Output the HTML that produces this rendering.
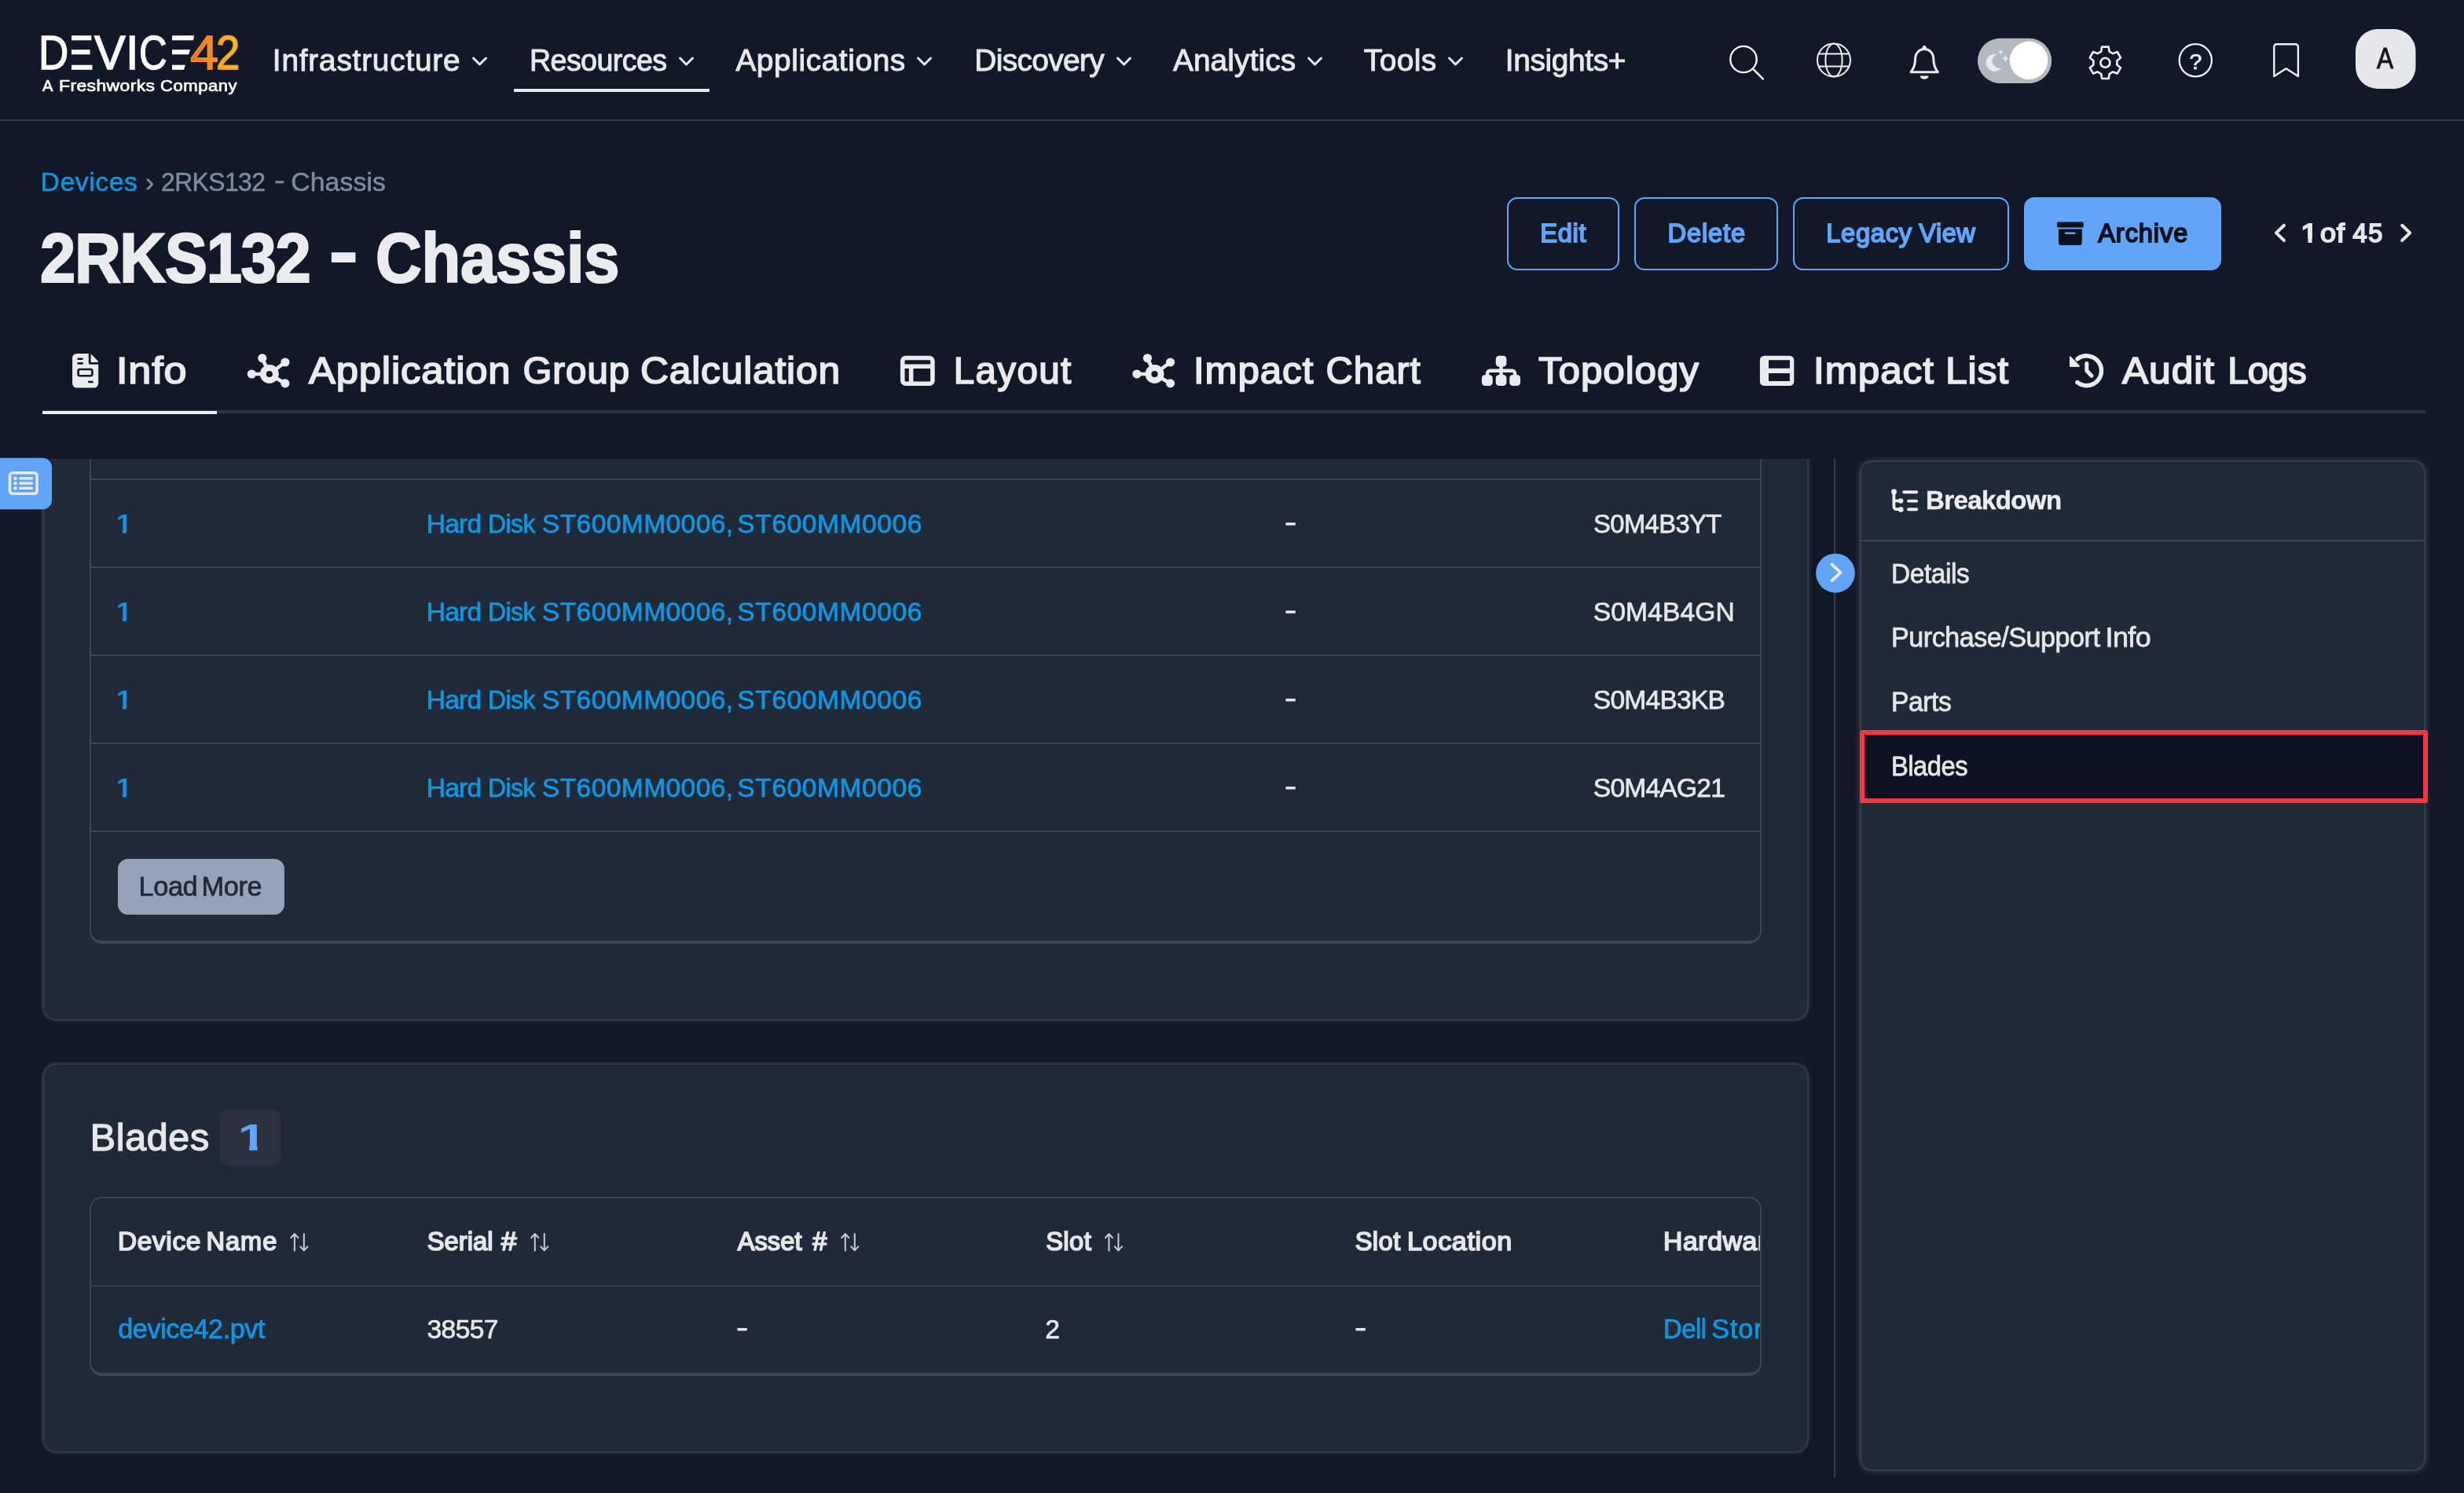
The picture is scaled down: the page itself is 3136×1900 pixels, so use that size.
<!DOCTYPE html>
<html lang="en"><head><meta charset="utf-8"><title>2RKS132 - Chassis | Device42</title>
<style>
html,body{margin:0;padding:0;background:#111827;overflow:hidden;}
body{width:3136px;height:1900px;position:relative;overflow:hidden;font-family:"Liberation Sans",Arial,sans-serif;}
.t{position:absolute;white-space:nowrap;display:block;margin:0;padding:0;border:0;background:none;font-family:inherit;font-weight:400;text-decoration:none;text-align:left;cursor:default;}
.g{position:static;display:block;margin:0;padding:0;border:0;background:none;font:inherit;color:inherit;text-decoration:none;width:0;height:0;}
button.g,button.t{appearance:none;-webkit-appearance:none;overflow:visible;}
.abs{position:absolute;}
.card{position:absolute;background:#1f2937;border-radius:16px;box-shadow:0 0 0 2.2px rgba(170,180,205,0.10),0 0 5px 2px rgba(170,180,205,0.21);}
.tbl{position:absolute;border:2px solid #3b4554;border-radius:16px;box-sizing:border-box;}
.hl{position:absolute;left:116px;width:2124px;height:2px;background:#3b4554;}
.btn{position:absolute;box-sizing:border-box;border:2.4px solid #60a5fa;border-radius:13px;top:251px;height:92.5px;}
svg{position:absolute;left:0;top:0;}
</style></head><body>
<div class="abs" style="left:0;top:152px;width:3136px;height:2px;background:#343c4b"></div>
<div class="abs" style="left:654px;top:112.5px;width:249px;height:4px;background:#e7e9ee"></div>
<div class="abs" style="left:54px;top:522px;width:3033px;height:4px;background:#2c3444"></div>
<div class="abs" style="left:54px;top:522.5px;width:222px;height:4.5px;background:#eceef2"></div>
<div class="btn" style="left:1918px;width:143px"></div>
<div class="btn" style="left:2080px;width:183px"></div>
<div class="btn" style="left:2281.6px;width:275px"></div>
<div class="btn" style="left:2576px;width:251px;background:#60a5fa"></div>
<div class="abs" style="left:0;top:584px;width:2322px;height:1316px;overflow:hidden">
 <div class="abs" style="left:0;top:-584px;width:2322px;height:1900px">
  <div class="card" style="left:56px;top:300px;width:2244px;height:997px"></div>
  <div class="tbl" style="left:114px;top:300px;width:2128px;height:901px;border-bottom-width:4px"></div>
  <div class="hl" style="top:609px"></div><div class="hl" style="top:721px"></div><div class="hl" style="top:833px"></div><div class="hl" style="top:945px"></div><div class="hl" style="top:1057px"></div>
  <div class="abs" style="left:150px;top:1093px;width:212px;height:71px;border-radius:13px;background:#94a3b8"></div>
  <div class="card" style="left:56px;top:1355px;width:2244px;height:492px"></div>
  <div class="abs" style="left:280.4px;top:1412px;width:76.4px;height:71.4px;border-radius:9px;background:#2b313e"></div>
  <div class="tbl" style="left:114px;top:1523px;width:2128px;height:227.6px;border-bottom-width:4px"></div>
  <div class="hl" style="top:1635.6px;height:1.6px"></div>
 </div>
</div>
<div class="card" style="left:2369px;top:588px;width:716px;height:1282px;border-radius:13px;box-shadow:0 0 0 2.2px rgba(170,180,205,0.10),0 0 8px 2px rgba(170,180,205,0.27)"></div>
<div class="abs" style="left:2368px;top:687px;width:718px;height:2px;background:#3b4554"></div>
<div class="abs" style="left:2367px;top:929px;width:722.5px;height:93.4px;box-sizing:border-box;border:6.4px solid #f23547;background:#0b1323;border-radius:3px"></div>
<svg width="3136" height="1900" viewBox="0 0 3136 1900" style="will-change:transform">
<path d="M602.5 74.0 L610.5 82.0 L618.5 74.0" fill="none" stroke="#e7e9ee" stroke-width="3" stroke-linecap="round" stroke-linejoin="round"/>
<path d="M865.5 74.0 L873.5 82.0 L881.5 74.0" fill="none" stroke="#e7e9ee" stroke-width="3" stroke-linecap="round" stroke-linejoin="round"/>
<path d="M1168.5 74.0 L1176.5 82.0 L1184.5 74.0" fill="none" stroke="#e7e9ee" stroke-width="3" stroke-linecap="round" stroke-linejoin="round"/>
<path d="M1422.5 74.0 L1430.5 82.0 L1438.5 74.0" fill="none" stroke="#e7e9ee" stroke-width="3" stroke-linecap="round" stroke-linejoin="round"/>
<path d="M1665.5 74.0 L1673.5 82.0 L1681.5 74.0" fill="none" stroke="#e7e9ee" stroke-width="3" stroke-linecap="round" stroke-linejoin="round"/>
<path d="M1844.5 74.0 L1852.5 82.0 L1860.5 74.0" fill="none" stroke="#e7e9ee" stroke-width="3" stroke-linecap="round" stroke-linejoin="round"/>
<circle cx="2219" cy="75.5" r="16.7" fill="none" stroke="#fff" stroke-width="2.3"/><path d="M2231 87.6 L2243.8 100.4" stroke="#fff" stroke-width="2.5" stroke-linecap="round"/>
<g fill="none" stroke="#eef0f3" stroke-width="2"><circle cx="2334" cy="76.5" r="21"/><ellipse cx="2334" cy="76.5" rx="10.6" ry="21"/><path d="M2314.6 68.6 H2353.4 M2314.6 84.6 H2353.4"/></g>
<g fill="none" stroke="#e7e9ee" stroke-width="3" stroke-linejoin="round"><path d="M2432 91.8 C2436.6 86 2437.6 80 2437.6 75 C2437.6 67.6 2442.6 62.6 2449.2 62.6 C2455.8 62.6 2460.8 67.6 2460.8 75 C2460.8 80 2461.8 86 2466.4 91.8 Z"/></g><circle cx="2449.2" cy="60.6" r="2.6" fill="#e7e9ee"/><path d="M2443.6 96.4 A5.7 5.2 0 0 0 2454.8 96.4 Z" fill="#e7e9ee"/>
<rect x="2517" y="48.8" width="94.2" height="57.2" rx="28.6" fill="#b3b8c0"/><circle cx="2582.1" cy="76.9" r="24.3" fill="#fff"/>
<path d="M2541.5 69.2 A11 11 0 1 0 2547.6 86.2 A9 9 0 0 1 2541.5 69.2 Z" fill="#e9ebef"/>
<path d="M2546.3 62.5 L2547.136 65.464 L2550.1000000000004 66.3 L2547.136 67.136 L2546.3 70.1 L2545.4640000000004 67.136 L2542.5 66.3 L2545.4640000000004 65.464 Z" fill="#eef0f3"/>
<path d="M2552.6 69.2 L2553.7439999999997 73.256 L2557.7999999999997 74.4 L2553.7439999999997 75.54400000000001 L2552.6 79.60000000000001 L2551.456 75.54400000000001 L2547.4 74.4 L2551.456 73.256 Z" fill="#eef0f3"/>
<path d="M2684.60 65.52 L2683.68 59.65 L2675.12 59.65 L2674.20 65.52 L2669.63 68.16 L2664.09 66.02 L2659.81 73.43 L2664.43 77.16 L2664.43 82.44 L2659.81 86.17 L2664.09 93.58 L2669.63 91.44 L2674.20 94.08 L2675.12 99.95 L2683.68 99.95 L2684.60 94.08 L2689.17 91.44 L2694.71 93.58 L2698.99 86.17 L2694.37 82.44 L2694.37 77.16 L2698.99 73.43 L2694.71 66.02 L2689.17 68.16 Z" fill="none" stroke="#eef0f3" stroke-width="2.6" stroke-linejoin="round"/><circle cx="2679.4" cy="79.8" r="6" fill="none" stroke="#eef0f3" stroke-width="2.6"/>
<circle cx="2794.3" cy="76.8" r="20.6" fill="none" stroke="#eef0f3" stroke-width="2.3"/>
<path d="M2894.3 97 V59.6 a3.4 3.4 0 0 1 3.4 -3.4 h23.8 a3.4 3.4 0 0 1 3.4 3.4 V97 L2909.6 87.2 Z" fill="none" stroke="#eef0f3" stroke-width="2.4" stroke-linejoin="round"/>
<rect x="2998" y="37" width="76.5" height="76" rx="28" fill="#e5e7eb"/>
<rect x="2618" y="282.4" width="33.8" height="7.2" rx="1.8" fill="#0a101c"/><path d="M2620 291.4 H2649.8 V308.4 a3.6 3.6 0 0 1 -3.6 3.6 H2623.6 a3.6 3.6 0 0 1 -3.6 -3.6 Z" fill="#0a101c"/><rect x="2628" y="295.4" width="13.6" height="2.7" rx="1.3" fill="#60a5fa"/>
<path d="M2907 286.8 L2897 296.4 L2907 306" fill="none" stroke="#e5e7eb" stroke-width="4" stroke-linecap="round" stroke-linejoin="round"/>
<path d="M3057.2 286.8 L3067.2 296.4 L3057.2 306" fill="none" stroke="#e5e7eb" stroke-width="4" stroke-linecap="round" stroke-linejoin="round"/>
<path d="M97.6 450 H112.8 V461.2 a2.6 2.6 0 0 0 2.6 2.6 H125.2 V488 a5.5 5.5 0 0 1 -5.5 5.5 H97.6 a5.5 5.5 0 0 1 -5.5 -5.5 V455.5 a5.5 5.5 0 0 1 5.5 -5.5 Z" fill="#e9ebef"/><path d="M115.6 450.2 L125 459.8 V461 H115.6 Z" fill="#e9ebef"/><g stroke="#111827" stroke-width="2.6" stroke-linecap="round" fill="none"><path d="M99.6 456.8 H104.6 M99.6 462.4 H104.6 M113.2 486 H117.6"/><rect x="99.6" y="470" width="17.8" height="8.2" rx="2"/></g>
<g stroke="#e9ebef" stroke-width="4.6" stroke-linecap="round"><path d="M342.90000000000003 476 L333.8 455.8"/><path d="M342.90000000000003 476 L362.90000000000003 461"/><path d="M342.90000000000003 476 L320.3 476"/><path d="M342.90000000000003 476 L362.90000000000003 487.9"/></g><circle cx="333.8" cy="455.8" r="5.6" fill="#e9ebef"/><circle cx="362.90000000000003" cy="461" r="5.6" fill="#e9ebef"/><circle cx="320.3" cy="476" r="5.6" fill="#e9ebef"/><circle cx="362.90000000000003" cy="487.9" r="5.6" fill="#e9ebef"/><circle cx="342.90000000000003" cy="476" r="11.9" fill="#e9ebef"/><circle cx="342.90000000000003" cy="476" r="4.1" fill="#111827"/>
<g stroke="#e9ebef" stroke-width="4.6" stroke-linecap="round"><path d="M1469.5 476 L1460.4 455.8"/><path d="M1469.5 476 L1489.5 461"/><path d="M1469.5 476 L1446.9 476"/><path d="M1469.5 476 L1489.5 487.9"/></g><circle cx="1460.4" cy="455.8" r="5.6" fill="#e9ebef"/><circle cx="1489.5" cy="461" r="5.6" fill="#e9ebef"/><circle cx="1446.9" cy="476" r="5.6" fill="#e9ebef"/><circle cx="1489.5" cy="487.9" r="5.6" fill="#e9ebef"/><circle cx="1469.5" cy="476" r="11.9" fill="#e9ebef"/><circle cx="1469.5" cy="476" r="4.1" fill="#111827"/>
<g fill="none" stroke="#e9ebef" stroke-width="5.6"><rect x="1148.7" y="455.55" width="38.2" height="32.65" rx="4"/><path d="M1148.7 466.3 H1186.9 M1159.6 466.3 V488.2"/></g>
<g fill="#e9ebef"><rect x="1903.7" y="452.7" width="13.7" height="14" rx="4.2"/><rect x="1885.9" y="477" width="13.8" height="14.1" rx="4.2"/><rect x="1903.7" y="477" width="13.7" height="14.1" rx="4.2"/><rect x="1921.2" y="477" width="13.8" height="14.1" rx="4.2"/></g><path d="M1910.5 466 V478 M1893 478 V475 a3.2 3.2 0 0 1 3.2 -3.2 H1924.8 a3.2 3.2 0 0 1 3.2 3.2 V478" fill="none" stroke="#e9ebef" stroke-width="4.4"/>
<path fill-rule="evenodd" fill="#e9ebef" d="M2245.6 452.7 H2277.6 a5.7 5.7 0 0 1 5.7 5.7 V485.4 a5.7 5.7 0 0 1 -5.7 5.7 H2245.6 a5.7 5.7 0 0 1 -5.7 -5.7 V458.4 a5.7 5.7 0 0 1 5.7 -5.7 Z M2251 458.2 V468.8 H2277.9 V458.2 Z M2251 474.9 V485.1 H2277.9 V474.9 Z"/>
<path d="M2643.96 456.86 A18.9 18.9 0 1 1 2643.96 486.64" fill="none" stroke="#e9ebef" stroke-width="5.5" stroke-linecap="round"/><path d="M2635.4 453.6 L2646.6 465 a1.2 1.2 0 0 1 -0.9 2 H2635.6 a1.6 1.6 0 0 1 -1.6 -1.6 V454.2 a0.8 0.8 0 0 1 1.4 -0.6 Z" fill="#e9ebef"/><path d="M2655.8 462.6 V471.8 L2662 478.2" fill="none" stroke="#e9ebef" stroke-width="5" stroke-linecap="round" stroke-linejoin="round"/>
<path d="M0 582.8 H54 a12 12 0 0 1 12 12 V636.2 a12 12 0 0 1 -12 12 H0 Z" fill="#60a5fa"/><rect x="12.5" y="601.8" width="34.6" height="26.4" rx="3.4" fill="none" stroke="#e8eaee" stroke-width="3.6"/><g fill="#e8eaee"><circle cx="19.5" cy="608.8" r="2.3"/><circle cx="19.5" cy="615" r="2.3"/><circle cx="19.5" cy="621.3" r="2.3"/><rect x="24.2" y="607" width="17.8" height="3.6" rx="1.6"/><rect x="24.2" y="613.2" width="17.8" height="3.6" rx="1.6"/><rect x="24.2" y="619.5" width="17.8" height="3.6" rx="1.6"/></g>
<rect x="2334" y="584" width="2.1" height="1296" fill="#363e4e"/><circle cx="2336" cy="729.3" r="24.9" fill="#60a5fa"/><path d="M2331.6 718.4 L2342.6 728.6 L2331.6 738.8" fill="none" stroke="#e8eaee" stroke-width="4" stroke-linecap="round" stroke-linejoin="round"/>
<g stroke="#eceef2" fill="none" stroke-width="3.8" stroke-linecap="round"><path d="M2410.4 626 V644.6 a3.6 3.6 0 0 0 3.6 3.6 H2418 M2410.4 637.4 H2418"/><path d="M2423.2 626.2 H2439.2 M2429 637.6 H2439.2 M2429 648.2 H2439.2" stroke-width="3.9"/></g><g fill="#eceef2"><rect x="2407.2" y="622.6" width="6.6" height="6.6" rx="2.4"/><circle cx="2419.2" cy="637.4" r="3.1"/><circle cx="2419.2" cy="648.4" r="3.3"/></g>
<g fill="none" stroke="#c9cdd4" stroke-width="2" stroke-linecap="round" stroke-linejoin="round"><path d="M374.90000000000003 1591.4 V1570.4 M370.3 1575.2 L374.90000000000003 1570.2 L379.5 1575.2"/><path d="M386.90000000000003 1570.2 V1591.2 M382.3 1586.4 L386.90000000000003 1591.4 L391.5 1586.4"/></g>
<g fill="none" stroke="#c9cdd4" stroke-width="2" stroke-linecap="round" stroke-linejoin="round"><path d="M680.8000000000001 1591.4 V1570.4 M676.2 1575.2 L680.8000000000001 1570.2 L685.4000000000001 1575.2"/><path d="M692.8000000000001 1570.2 V1591.2 M688.2 1586.4 L692.8000000000001 1591.4 L697.4000000000001 1586.4"/></g>
<g fill="none" stroke="#c9cdd4" stroke-width="2" stroke-linecap="round" stroke-linejoin="round"><path d="M1075.8 1591.4 V1570.4 M1071.2 1575.2 L1075.8 1570.2 L1080.4 1575.2"/><path d="M1087.8 1570.2 V1591.2 M1083.2 1586.4 L1087.8 1591.4 L1092.4 1586.4"/></g>
<g fill="none" stroke="#c9cdd4" stroke-width="2" stroke-linecap="round" stroke-linejoin="round"><path d="M1411.3999999999999 1591.4 V1570.4 M1406.8 1575.2 L1411.3999999999999 1570.2 L1416.0 1575.2"/><path d="M1423.3999999999999 1570.2 V1591.2 M1418.8 1586.4 L1423.3999999999999 1591.4 L1428.0 1586.4"/></g>
<text x="2794.4" y="88" text-anchor="middle" font-family="Liberation Sans, Arial, sans-serif" font-size="28.5" fill="#eef0f3" stroke="#eef0f3" stroke-width="0.7">?</text>
</svg>
<div class="logo" role="img" aria-label="DEVICE42 - A Freshworks Company" style="position:absolute;left:0;top:0;width:320px;height:130px;font-family:'Liberation Sans',Arial,sans-serif;white-space:nowrap"><span style="position:absolute;left:48.76px;top:26.90px;font-size:62.0px;line-height:80px;transform-origin:0 0;transform:scaleX(0.8549);color:#fff;-webkit-text-stroke:1.4px #fff;z-index:3;">D</span><span style="position:absolute;left:80.40px;top:26.90px;font-size:62.0px;line-height:80px;transform-origin:0 0;transform:scaleX(0.9497);color:#fff;-webkit-text-stroke:1.4px #fff;z-index:1;">E</span><span style="position:absolute;left:120.00px;top:26.90px;font-size:62.0px;line-height:80px;transform-origin:0 0;transform:scaleX(0.9602);color:#fff;-webkit-text-stroke:1.4px #fff;z-index:3;">V</span><span style="position:absolute;left:160.16px;top:26.90px;font-size:62.0px;line-height:80px;transform-origin:0 0;transform:scaleX(0.9585);color:#fff;-webkit-text-stroke:1.4px #fff;z-index:3;">I</span><span style="position:absolute;left:177.09px;top:26.90px;font-size:62.0px;line-height:80px;transform-origin:0 0;transform:scaleX(0.7956);color:#fff;-webkit-text-stroke:1.4px #fff;z-index:3;">C</span><span style="position:absolute;left:206.11px;top:26.90px;font-size:62.0px;line-height:80px;transform-origin:0 0;transform:scaleX(1.0706);color:#fff;-webkit-text-stroke:1.4px #fff;z-index:1;">E</span><span style="position:absolute;left:241.69px;top:26.90px;font-size:62.0px;line-height:80px;transform-origin:0 0;transform:scaleX(1.0416);background:linear-gradient(90deg,#f26a21,#f8981d);-webkit-background-clip:text;background-clip:text;color:transparent;-webkit-text-stroke:1.3px rgba(247,150,30,0.75);z-index:3;">4</span><span style="position:absolute;left:274.64px;top:26.90px;font-size:62.0px;line-height:80px;transform-origin:0 0;transform:scaleX(0.8809);background:linear-gradient(90deg,#f9a51a,#fdc70c);-webkit-background-clip:text;background-clip:text;color:transparent;-webkit-text-stroke:1.3px rgba(247,150,30,0.75);z-index:3;">2</span><i style="position:absolute;left:82.5px;top:40px;width:8.7px;height:54px;background:#111827;z-index:2"></i><i style="position:absolute;left:208.5px;top:40px;width:10.2px;height:54px;background:#111827;z-index:2"></i><i style="position:absolute;left:240px;top:40px;width:30px;height:54px;background:#111827;z-index:2;transform-origin:0 0;transform:translateX(9.4px) skewX(-17.5deg)"></i></div>
<div id="txt" style="position:absolute;left:0;top:0;width:3136px;height:1900px;will-change:transform">
<nav aria-label="Main">
<a href="#" class="t" style="left:346.87px;top:53.00px;font-size:38.81px;line-height:47px;color:#e7e9ee;letter-spacing:0.782px;-webkit-text-stroke:1.0px #e7e9ee;">Infrastructure</a>
<a href="#" class="t" style="left:673.96px;top:53.00px;font-size:38.81px;line-height:47px;color:#e7e9ee;letter-spacing:-0.585px;-webkit-text-stroke:1.0px #e7e9ee;transform-origin:0 0;transform:scaleX(0.9684);">Resources</a>
<a href="#" class="t" style="left:936.40px;top:53.00px;font-size:38.81px;line-height:47px;color:#e7e9ee;letter-spacing:0.604px;-webkit-text-stroke:1.0px #e7e9ee;">Applications</a>
<a href="#" class="t" style="left:1240.37px;top:53.00px;font-size:38.81px;line-height:47px;color:#e7e9ee;letter-spacing:-0.641px;-webkit-text-stroke:1.0px #e7e9ee;">Discovery</a>
<a href="#" class="t" style="left:1492.90px;top:53.00px;font-size:38.81px;line-height:47px;color:#e7e9ee;letter-spacing:0.139px;-webkit-text-stroke:1.0px #e7e9ee;">Analytics</a>
<a href="#" class="t" style="left:1735.79px;top:53.00px;font-size:38.81px;line-height:47px;color:#e7e9ee;letter-spacing:0.480px;-webkit-text-stroke:1.0px #e7e9ee;">Tools</a>
<a href="#" class="t" style="left:1915.87px;top:53.00px;font-size:38.81px;line-height:47px;color:#e7e9ee;letter-spacing:-0.343px;-webkit-text-stroke:1.0px #e7e9ee;">Insights+</a>
</nav>
<div class="s">
<span class="g"><span class="t" style="left:53.88px;top:96.50px;font-size:20.12px;line-height:25px;color:#ffffff;-webkit-text-stroke:0.7px #ffffff;">A</span> <span class="t" style="left:74.79px;top:96.50px;font-size:20.12px;line-height:25px;color:#ffffff;letter-spacing:0.347px;-webkit-text-stroke:0.7px #ffffff;transform-origin:0 0;transform:scaleX(1.1396);">Freshworks</span> <span class="t" style="left:204.14px;top:96.50px;font-size:20.12px;line-height:25px;color:#ffffff;letter-spacing:0.453px;-webkit-text-stroke:0.7px #ffffff;transform-origin:0 0;transform:scaleX(1.0985);">Company</span></span>
</div>
<nav aria-label="Breadcrumb">
<a href="#" class="t" style="left:51.57px;top:210.50px;font-size:33.72px;line-height:41px;color:#0d97e2;letter-spacing:0.560px;-webkit-text-stroke:0.5px #0d97e2;">Devices</a>
<span class="t" style="left:184.95px;top:210.50px;font-size:33.72px;line-height:41px;color:#7c8d9e;-webkit-text-stroke:0.5px #7c8d9e;">›</span>
<span class="g"><span class="t" style="left:205.01px;top:210.50px;font-size:33.72px;line-height:41px;color:#7c8d9e;letter-spacing:-0.624px;-webkit-text-stroke:0.5px #7c8d9e;transform-origin:0 0;transform:scaleX(0.9451);">2RKS132</span> <span class="t" style="left:348.71px;top:208.50px;font-size:33.72px;line-height:41px;color:#7c8d9e;-webkit-text-stroke:0.5px #7c8d9e;transform-origin:0 0;transform:scaleX(1.2281);">-</span> <span class="t" style="left:370.22px;top:210.50px;font-size:33.72px;line-height:41px;color:#7c8d9e;letter-spacing:0.117px;-webkit-text-stroke:0.5px #7c8d9e;">Chassis</span></span>
</nav>
<div class="s">
<h1 class="g"><span class="t" style="left:51.34px;top:275.00px;font-size:88.43px;line-height:107px;color:#eaecf0;font-weight:700;letter-spacing:-1.439px;-webkit-text-stroke:2.2px #eaecf0;transform-origin:0 0;transform:scaleX(0.92);">2RKS132</span> <span class="t" style="left:418.96px;top:267.00px;font-size:88.43px;line-height:107px;color:#eaecf0;font-weight:700;-webkit-text-stroke:2.2px #eaecf0;transform-origin:0 0;transform:scaleX(1.2363);">-</span> <span class="t" style="left:478.34px;top:275.00px;font-size:88.43px;line-height:107px;color:#eaecf0;font-weight:700;letter-spacing:-0.264px;-webkit-text-stroke:2.2px #eaecf0;transform-origin:0 0;transform:scaleX(0.92);">Chassis</span></h1>
</div>
<div class="s" role="toolbar">
<button type="button" class="t" style="left:1960.37px;top:276.50px;font-size:32.65px;line-height:40px;color:#60a5fa;letter-spacing:0.646px;-webkit-text-stroke:1.8px #60a5fa;">Edit</button>
<button type="button" class="t" style="left:2122.47px;top:276.50px;font-size:32.65px;line-height:40px;color:#60a5fa;letter-spacing:0.871px;-webkit-text-stroke:1.8px #60a5fa;">Delete</button>
<button type="button" class="g"><span class="t" style="left:2324.17px;top:276.50px;font-size:32.65px;line-height:40px;color:#60a5fa;letter-spacing:0.715px;-webkit-text-stroke:1.8px #60a5fa;">Legacy</span> <span class="t" style="left:2442.22px;top:276.50px;font-size:32.65px;line-height:40px;color:#60a5fa;letter-spacing:0.494px;-webkit-text-stroke:1.8px #60a5fa;">View</span></button>
<button type="button" class="t" style="left:2670.22px;top:276.50px;font-size:32.65px;line-height:40px;color:#0a101c;letter-spacing:0.885px;-webkit-text-stroke:1.8px #0a101c;">Archive</button>
</div>
<div class="s">
<span class="g"><span class="t" style="left:2928.14px;top:276.50px;font-size:32.65px;line-height:40px;color:#e5e7eb;-webkit-text-stroke:1.8px #e5e7eb;transform-origin:0 0;transform:scaleX(1.2451);clip-path:polygon(0 0,19.6px 0,19.6px 27.1px,11.7px 27.1px,11.7px 40px,7.6px 40px,7.6px 27.1px,0 27.1px);">1</span> <span class="t" style="left:2953.09px;top:276.50px;font-size:32.65px;line-height:40px;color:#e5e7eb;letter-spacing:0.834px;-webkit-text-stroke:1.8px #e5e7eb;transform-origin:0 0;transform:scaleX(1.1033);">of</span> <span class="t" style="left:2994.61px;top:276.50px;font-size:32.65px;line-height:40px;color:#e5e7eb;letter-spacing:1.577px;-webkit-text-stroke:1.8px #e5e7eb;">45</span></span>
</div>
<div class="s">
<span class="t" style="left:3025.36px;top:51.00px;font-size:37.62px;line-height:46px;color:#15181e;-webkit-text-stroke:0.9px #15181e;transform-origin:0 0;transform:scaleX(0.8419);">A</span>
</div>
<nav aria-label="Tabs">
<a href="#" class="t" style="left:147.85px;top:443.00px;font-size:47.44px;line-height:57px;color:#e9ebef;letter-spacing:0.779px;-webkit-text-stroke:1.7px #e9ebef;transform-origin:0 0;transform:scaleX(1.0996);">Info</a>
<a href="#" class="g"><span class="t" style="left:392.58px;top:443.00px;font-size:47.44px;line-height:57px;color:#e9ebef;letter-spacing:0.750px;-webkit-text-stroke:1.7px #e9ebef;transform-origin:0 0;transform:scaleX(1.071);">Application</span> <span class="t" style="left:665.46px;top:443.00px;font-size:47.44px;line-height:57px;color:#e9ebef;letter-spacing:0.984px;-webkit-text-stroke:1.7px #e9ebef;">Group</span> <span class="t" style="left:815.05px;top:443.00px;font-size:47.44px;line-height:57px;color:#e9ebef;letter-spacing:0.768px;-webkit-text-stroke:1.7px #e9ebef;transform-origin:0 0;transform:scaleX(1.0482);">Calculation</span></a>
<a href="#" class="t" style="left:1213.87px;top:443.00px;font-size:47.44px;line-height:57px;color:#e9ebef;letter-spacing:1.370px;-webkit-text-stroke:1.7px #e9ebef;">Layout</a>
<a href="#" class="g"><span class="t" style="left:1519.34px;top:443.00px;font-size:47.44px;line-height:57px;color:#e9ebef;letter-spacing:0.939px;-webkit-text-stroke:1.7px #e9ebef;transform-origin:0 0;transform:scaleX(1.0357);">Impact</span> <span class="t" style="left:1687.46px;top:443.00px;font-size:47.44px;line-height:57px;color:#e9ebef;letter-spacing:1.049px;-webkit-text-stroke:1.7px #e9ebef;">Chart</span></a>
<a href="#" class="t" style="left:1957.91px;top:443.00px;font-size:47.44px;line-height:57px;color:#e9ebef;letter-spacing:0.911px;-webkit-text-stroke:1.7px #e9ebef;transform-origin:0 0;transform:scaleX(1.0389);">Topology</a>
<a href="#" class="g"><span class="t" style="left:2307.53px;top:443.00px;font-size:47.44px;line-height:57px;color:#e9ebef;letter-spacing:0.936px;-webkit-text-stroke:1.7px #e9ebef;transform-origin:0 0;transform:scaleX(1.04);">Impact</span> <span class="t" style="left:2475.98px;top:443.00px;font-size:47.44px;line-height:57px;color:#e9ebef;letter-spacing:0.778px;-webkit-text-stroke:1.7px #e9ebef;transform-origin:0 0;transform:scaleX(1.0527);">List</span></a>
<a href="#" class="g"><span class="t" style="left:2701.18px;top:443.00px;font-size:47.44px;line-height:57px;color:#e9ebef;letter-spacing:0.902px;-webkit-text-stroke:1.7px #e9ebef;transform-origin:0 0;transform:scaleX(1.0486);">Audit</span> <span class="t" style="left:2835.17px;top:443.00px;font-size:47.44px;line-height:57px;color:#e9ebef;letter-spacing:-0.748px;-webkit-text-stroke:1.7px #e9ebef;">Logs</span></a>
</nav>
<section aria-label="Parts">
<a href="#" class="t" style="left:146.58px;top:646.00px;font-size:33.58px;line-height:41px;color:#0d97e2;-webkit-text-stroke:0.75px #0d97e2;transform-origin:0 0;transform:scaleX(1.1669);clip-path:polygon(0 0,20.1px 0,20.1px 28.0px,12.0px 28.0px,12.0px 41px,7.8px 41px,7.8px 28.0px,0 28.0px);">1</a>
<a href="#" class="g"><span class="t" style="left:542.68px;top:646.00px;font-size:33.58px;line-height:41px;color:#0d97e2;letter-spacing:-0.792px;-webkit-text-stroke:0.75px #0d97e2;">Hard</span> <span class="t" style="left:621.01px;top:646.00px;font-size:33.58px;line-height:41px;color:#0d97e2;letter-spacing:-0.556px;-webkit-text-stroke:0.75px #0d97e2;transform-origin:0 0;transform:scaleX(0.9492);">Disk</span> <span class="t" style="left:689.85px;top:646.00px;font-size:33.58px;line-height:41px;color:#0d97e2;letter-spacing:0.404px;-webkit-text-stroke:0.75px #0d97e2;">ST600MM0006,</span> <span class="t" style="left:938.35px;top:646.00px;font-size:33.58px;line-height:41px;color:#0d97e2;letter-spacing:0.553px;-webkit-text-stroke:0.75px #0d97e2;">ST600MM0006</span></a>
<span class="t" style="left:1634.88px;top:644.00px;font-size:33.58px;line-height:41px;color:#e5e7eb;-webkit-text-stroke:0.75px #e5e7eb;transform-origin:0 0;transform:scaleX(1.3565);">-</span>
<span class="t" style="left:2027.88px;top:646.00px;font-size:33.58px;line-height:41px;color:#e5e7eb;letter-spacing:-0.622px;-webkit-text-stroke:0.75px #e5e7eb;transform-origin:0 0;transform:scaleX(0.9763);">S0M4B3YT</span>
<a href="#" class="t" style="left:146.58px;top:758.00px;font-size:33.58px;line-height:41px;color:#0d97e2;-webkit-text-stroke:0.75px #0d97e2;transform-origin:0 0;transform:scaleX(1.1669);clip-path:polygon(0 0,20.1px 0,20.1px 28.0px,12.0px 28.0px,12.0px 41px,7.8px 41px,7.8px 28.0px,0 28.0px);">1</a>
<a href="#" class="g"><span class="t" style="left:542.68px;top:758.00px;font-size:33.58px;line-height:41px;color:#0d97e2;letter-spacing:-0.792px;-webkit-text-stroke:0.75px #0d97e2;">Hard</span> <span class="t" style="left:621.01px;top:758.00px;font-size:33.58px;line-height:41px;color:#0d97e2;letter-spacing:-0.556px;-webkit-text-stroke:0.75px #0d97e2;transform-origin:0 0;transform:scaleX(0.9492);">Disk</span> <span class="t" style="left:689.85px;top:758.00px;font-size:33.58px;line-height:41px;color:#0d97e2;letter-spacing:0.404px;-webkit-text-stroke:0.75px #0d97e2;">ST600MM0006,</span> <span class="t" style="left:938.35px;top:758.00px;font-size:33.58px;line-height:41px;color:#0d97e2;letter-spacing:0.553px;-webkit-text-stroke:0.75px #0d97e2;">ST600MM0006</span></a>
<span class="t" style="left:1634.88px;top:756.00px;font-size:33.58px;line-height:41px;color:#e5e7eb;-webkit-text-stroke:0.75px #e5e7eb;transform-origin:0 0;transform:scaleX(1.3565);">-</span>
<span class="t" style="left:2027.85px;top:758.00px;font-size:33.58px;line-height:41px;color:#e5e7eb;letter-spacing:0.103px;-webkit-text-stroke:0.75px #e5e7eb;">S0M4B4GN</span>
<a href="#" class="t" style="left:146.58px;top:870.00px;font-size:33.58px;line-height:41px;color:#0d97e2;-webkit-text-stroke:0.75px #0d97e2;transform-origin:0 0;transform:scaleX(1.1669);clip-path:polygon(0 0,20.1px 0,20.1px 28.0px,12.0px 28.0px,12.0px 41px,7.8px 41px,7.8px 28.0px,0 28.0px);">1</a>
<a href="#" class="g"><span class="t" style="left:542.68px;top:870.00px;font-size:33.58px;line-height:41px;color:#0d97e2;letter-spacing:-0.792px;-webkit-text-stroke:0.75px #0d97e2;">Hard</span> <span class="t" style="left:621.01px;top:870.00px;font-size:33.58px;line-height:41px;color:#0d97e2;letter-spacing:-0.556px;-webkit-text-stroke:0.75px #0d97e2;transform-origin:0 0;transform:scaleX(0.9492);">Disk</span> <span class="t" style="left:689.85px;top:870.00px;font-size:33.58px;line-height:41px;color:#0d97e2;letter-spacing:0.404px;-webkit-text-stroke:0.75px #0d97e2;">ST600MM0006,</span> <span class="t" style="left:938.35px;top:870.00px;font-size:33.58px;line-height:41px;color:#0d97e2;letter-spacing:0.553px;-webkit-text-stroke:0.75px #0d97e2;">ST600MM0006</span></a>
<span class="t" style="left:1634.88px;top:868.00px;font-size:33.58px;line-height:41px;color:#e5e7eb;-webkit-text-stroke:0.75px #e5e7eb;transform-origin:0 0;transform:scaleX(1.3565);">-</span>
<span class="t" style="left:2027.85px;top:870.00px;font-size:33.58px;line-height:41px;color:#e5e7eb;letter-spacing:-0.790px;-webkit-text-stroke:0.75px #e5e7eb;">S0M4B3KB</span>
<a href="#" class="t" style="left:146.58px;top:982.00px;font-size:33.58px;line-height:41px;color:#0d97e2;-webkit-text-stroke:0.75px #0d97e2;transform-origin:0 0;transform:scaleX(1.1669);clip-path:polygon(0 0,20.1px 0,20.1px 28.0px,12.0px 28.0px,12.0px 41px,7.8px 41px,7.8px 28.0px,0 28.0px);">1</a>
<a href="#" class="g"><span class="t" style="left:542.68px;top:982.00px;font-size:33.58px;line-height:41px;color:#0d97e2;letter-spacing:-0.792px;-webkit-text-stroke:0.75px #0d97e2;">Hard</span> <span class="t" style="left:621.01px;top:982.00px;font-size:33.58px;line-height:41px;color:#0d97e2;letter-spacing:-0.556px;-webkit-text-stroke:0.75px #0d97e2;transform-origin:0 0;transform:scaleX(0.9492);">Disk</span> <span class="t" style="left:689.85px;top:982.00px;font-size:33.58px;line-height:41px;color:#0d97e2;letter-spacing:0.404px;-webkit-text-stroke:0.75px #0d97e2;">ST600MM0006,</span> <span class="t" style="left:938.35px;top:982.00px;font-size:33.58px;line-height:41px;color:#0d97e2;letter-spacing:0.553px;-webkit-text-stroke:0.75px #0d97e2;">ST600MM0006</span></a>
<span class="t" style="left:1634.88px;top:980.00px;font-size:33.58px;line-height:41px;color:#e5e7eb;-webkit-text-stroke:0.75px #e5e7eb;transform-origin:0 0;transform:scaleX(1.3565);">-</span>
<span class="t" style="left:2027.85px;top:982.00px;font-size:33.58px;line-height:41px;color:#e5e7eb;letter-spacing:-0.797px;-webkit-text-stroke:0.75px #e5e7eb;">S0M4AG21</span>
<button type="button" class="g"><span class="t" style="left:176.60px;top:1107.00px;font-size:34.36px;line-height:42px;color:#1f2937;letter-spacing:-0.461px;-webkit-text-stroke:0.7px #1f2937;">Load</span> <span class="t" style="left:256.60px;top:1107.00px;font-size:34.36px;line-height:42px;color:#1f2937;letter-spacing:-0.389px;-webkit-text-stroke:0.7px #1f2937;">More</span></button>
</section>
<section aria-label="Blades">
<h2 class="t" style="left:114.78px;top:1417.50px;font-size:48.37px;line-height:59px;color:#e5e7eb;letter-spacing:0.695px;-webkit-text-stroke:1.4px #e5e7eb;">Blades</h2>
<span class="t" style="left:303.20px;top:1417.50px;font-size:48.69px;line-height:59px;color:#60a5fa;font-weight:700;transform-origin:0 0;transform:scaleX(1.3213);clip-path:polygon(0 0,29.2px 0,29.2px 40.4px,18.6px 40.4px,18.6px 59px,10.8px 59px,10.8px 40.4px,0 40.4px);">1</span>
<span class="g"><span class="t" style="left:149.82px;top:1559.50px;font-size:32.62px;line-height:40px;color:#e5e7eb;letter-spacing:0.657px;-webkit-text-stroke:1.7px #e5e7eb;transform-origin:0 0;transform:scaleX(1.0229);">Device</span> <span class="t" style="left:262.38px;top:1559.50px;font-size:32.62px;line-height:40px;color:#e5e7eb;letter-spacing:0.999px;-webkit-text-stroke:1.7px #e5e7eb;">Name</span></span>
<span class="g"><span class="t" style="left:543.66px;top:1559.50px;font-size:32.62px;line-height:40px;color:#e5e7eb;letter-spacing:0.082px;-webkit-text-stroke:1.7px #e5e7eb;">Serial</span> <span class="t" style="left:638.28px;top:1559.50px;font-size:32.62px;line-height:40px;color:#e5e7eb;-webkit-text-stroke:1.7px #e5e7eb;transform-origin:0 0;transform:scaleX(1.0758);">#</span></span>
<span class="g"><span class="t" style="left:938.68px;top:1559.50px;font-size:32.62px;line-height:40px;color:#e5e7eb;letter-spacing:0.062px;-webkit-text-stroke:1.7px #e5e7eb;">Asset</span> <span class="t" style="left:1034.18px;top:1559.50px;font-size:32.62px;line-height:40px;color:#e5e7eb;-webkit-text-stroke:1.7px #e5e7eb;">#</span></span>
<span class="t" style="left:1331.16px;top:1559.50px;font-size:32.62px;line-height:40px;color:#e5e7eb;letter-spacing:0.446px;-webkit-text-stroke:1.7px #e5e7eb;">Slot</span>
<span class="g"><span class="t" style="left:1724.66px;top:1559.50px;font-size:32.62px;line-height:40px;color:#e5e7eb;letter-spacing:0.446px;-webkit-text-stroke:1.7px #e5e7eb;">Slot</span> <span class="t" style="left:1790.71px;top:1559.50px;font-size:32.62px;line-height:40px;color:#e5e7eb;letter-spacing:0.568px;-webkit-text-stroke:1.7px #e5e7eb;transform-origin:0 0;transform:scaleX(1.0473);">Location</span></span>
<span class="t" style="left:2117.05px;top:1559.50px;font-size:32.62px;line-height:40px;color:#e5e7eb;letter-spacing:0.667px;-webkit-text-stroke:1.7px #e5e7eb;transform-origin:0 0;transform:scaleX(1.0312);width:119.2px;overflow:hidden;">Hardware</span>
<a href="#" class="t" style="left:150.23px;top:1670.00px;font-size:34.3px;line-height:42px;color:#0d97e2;letter-spacing:-0.476px;-webkit-text-stroke:0.75px #0d97e2;">device42.pvt</a>
<span class="t" style="left:543.45px;top:1671.00px;font-size:33.58px;line-height:41px;color:#e5e7eb;letter-spacing:-0.567px;-webkit-text-stroke:0.75px #e5e7eb;">38557</span>
<span class="t" style="left:936.88px;top:1669.00px;font-size:33.58px;line-height:41px;color:#e5e7eb;-webkit-text-stroke:0.75px #e5e7eb;transform-origin:0 0;transform:scaleX(1.3565);">-</span>
<span class="t" style="left:1330.23px;top:1671.00px;font-size:33.58px;line-height:41px;color:#e5e7eb;-webkit-text-stroke:0.75px #e5e7eb;">2</span>
<span class="t" style="left:1723.88px;top:1669.00px;font-size:33.58px;line-height:41px;color:#e5e7eb;-webkit-text-stroke:0.75px #e5e7eb;transform-origin:0 0;transform:scaleX(1.3565);">-</span>
<a href="#" class="g"><span class="t" style="left:2116.74px;top:1670.00px;font-size:34.3px;line-height:42px;color:#0d97e2;letter-spacing:-0.472px;-webkit-text-stroke:0.75px #0d97e2;transform-origin:0 0;transform:scaleX(0.9558);">Dell</span> <span class="t" style="left:2178.23px;top:1670.00px;font-size:34.3px;line-height:42px;color:#0d97e2;letter-spacing:0.788px;-webkit-text-stroke:0.75px #0d97e2;width:61.8px;overflow:hidden;">Storage</span></a>
</section>
<aside aria-label="Breakdown">
<h3 class="t" style="left:2450.94px;top:615.50px;font-size:33.72px;line-height:41px;color:#eceef2;font-weight:700;letter-spacing:-0.570px;-webkit-text-stroke:0.5px #eceef2;transform-origin:0 0;transform:scaleX(0.9766);">Breakdown</h3>
<a href="#" class="t" style="left:2406.91px;top:707.50px;font-size:35.99px;line-height:44px;color:#e5e7eb;letter-spacing:-0.476px;-webkit-text-stroke:0.8px #e5e7eb;transform-origin:0 0;transform:scaleX(0.9297);">Details</a>
<a href="#" class="g"><span class="t" style="left:2406.85px;top:788.50px;font-size:35.99px;line-height:44px;color:#e5e7eb;letter-spacing:-0.502px;-webkit-text-stroke:0.8px #e5e7eb;transform-origin:0 0;transform:scaleX(0.9481);">Purchase/Support</span> <span class="t" style="left:2679.61px;top:788.50px;font-size:35.99px;line-height:44px;color:#e5e7eb;letter-spacing:-0.633px;-webkit-text-stroke:0.8px #e5e7eb;">Info</span></a>
<a href="#" class="t" style="left:2406.88px;top:870.50px;font-size:35.99px;line-height:44px;color:#e5e7eb;letter-spacing:-0.534px;-webkit-text-stroke:0.8px #e5e7eb;transform-origin:0 0;transform:scaleX(0.9388);">Parts</a>
<a href="#" class="t" style="left:2406.96px;top:952.50px;font-size:35.99px;line-height:44px;color:#e5e7eb;letter-spacing:-0.582px;-webkit-text-stroke:0.8px #e5e7eb;transform-origin:0 0;transform:scaleX(0.9105);">Blades</a>
</aside>
</div>
</body></html>
